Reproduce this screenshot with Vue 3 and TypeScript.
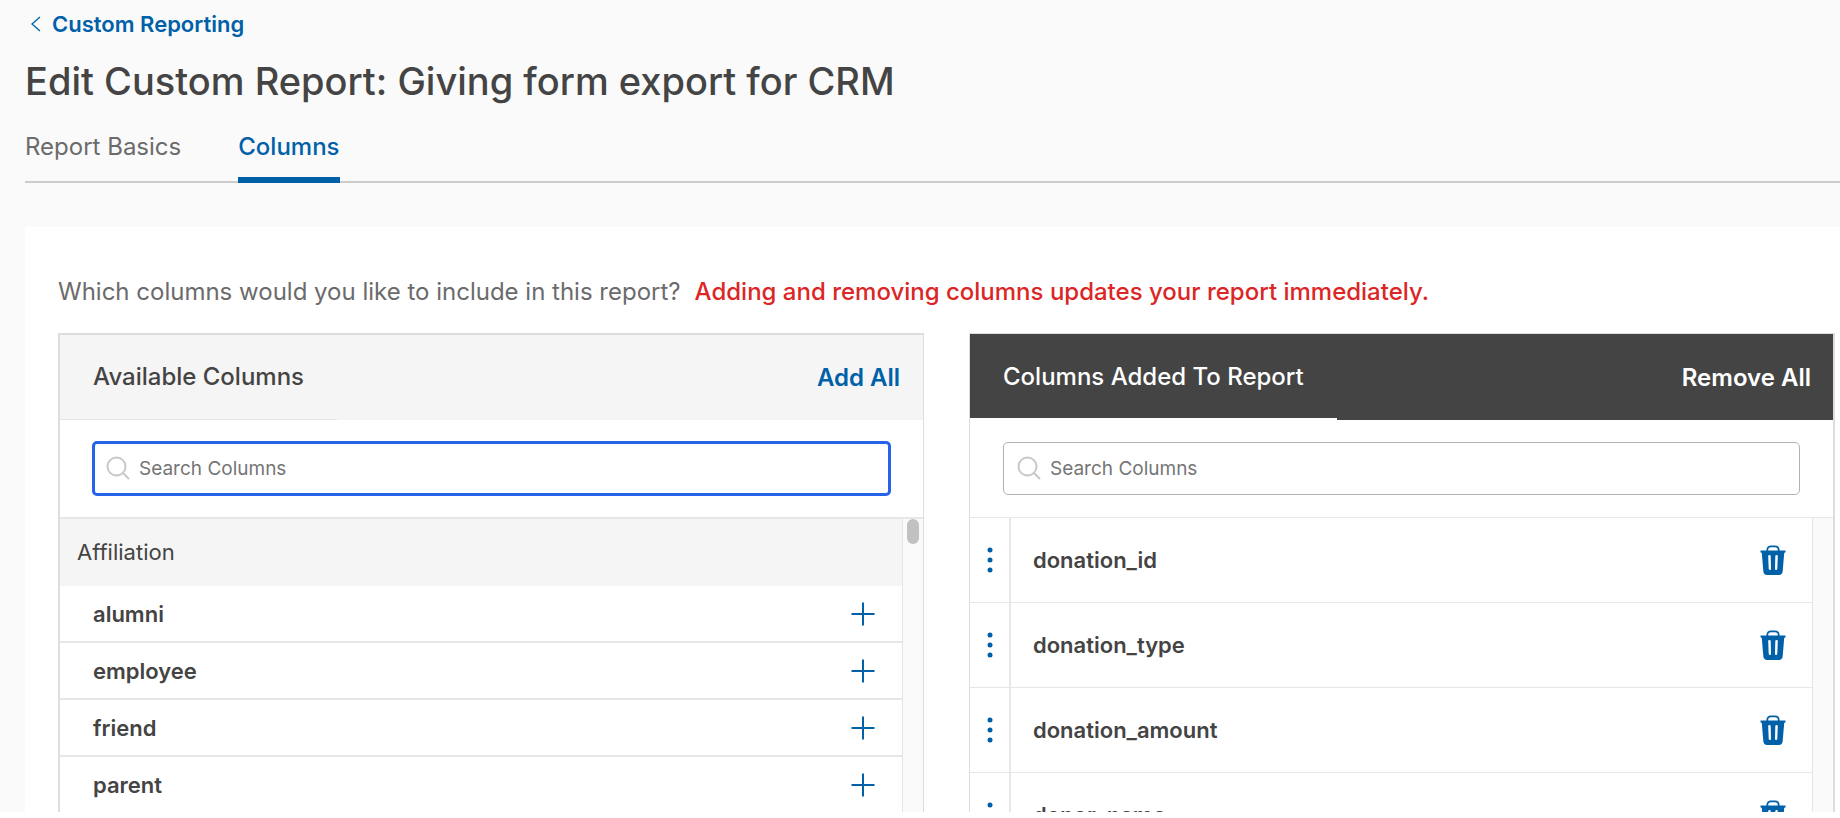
<script setup lang="ts">
import { ref } from 'vue'

const availableQuery = ref('')
const addedQuery = ref('')
const affiliations = ['alumni', 'employee', 'friend', 'parent']
const added = ['donation_id', 'donation_type', 'donation_amount', 'donor_name']
</script>

<template>
  <div class="page">
    <a class="back" href="#">
      <svg width="12" height="18" viewBox="0 0 12 18" aria-hidden="true">
        <path d="M10 2 2 9l8 7" fill="none" stroke="currentColor" stroke-width="1.3" />
      </svg>
      Custom Reporting
    </a>
    <h1>Edit Custom Report: Giving form export for CRM</h1>
    <nav class="tabs">
      <a href="#">Report Basics</a>
      <a href="#" class="active" aria-current="page">Columns</a>
    </nav>

    <main class="card">
      <p class="intro">
        <span>Which columns would you like to include in this report?</span>
        <strong>Adding and removing columns updates your report immediately.</strong>
      </p>
      <div class="panels">
        <section class="panel">
          <header>
            <h2>Available Columns</h2>
            <button type="button">Add All</button>
          </header>
          <label class="search focused">
            <svg width="24" height="26" viewBox="0 0 24 26" aria-hidden="true">
              <circle cx="10.500" cy="10.500" r="9" />
              <path d="m17 17 6 6" />
            </svg>
            <input v-model="availableQuery" type="text" placeholder="Search Columns" aria-label="Search available columns" />
          </label>
          <div class="body">
            <div class="list">
              <h3>Affiliation</h3>
              <ul class="available">
                <li v-for="name in affiliations" :key="name">
                  <span>{{ name }}</span>
                  <button type="button" :aria-label="`Add ${name}`">
                    <svg width="24" height="24" viewBox="0 0 24 24" aria-hidden="true">
                      <path d="M12 .5v23M.5 12h23" fill="none" stroke="currentColor" stroke-width="2" />
                    </svg>
                  </button>
                </li>
              </ul>
            </div>
            <div class="track"><div class="thumb"></div></div>
          </div>
        </section>

        <section class="panel dark">
          <header>
            <h2>Columns Added To Report</h2>
            <button type="button">Remove All</button>
          </header>
          <label class="search">
            <svg width="24" height="26" viewBox="0 0 24 26" aria-hidden="true">
              <circle cx="10.500" cy="10.500" r="9" />
              <path d="m17 17 6 6" />
            </svg>
            <input v-model="addedQuery" type="text" placeholder="Search Columns" aria-label="Search added columns" />
          </label>
          <div class="body">
            <ul class="list added">
              <li v-for="name in added" :key="name">
                <button type="button" class="handle" :aria-label="`Move ${name}`">
                  <svg width="6" height="26" viewBox="0 0 6 26" fill="currentColor" aria-hidden="true">
                    <circle cx="3" cy="3" r="2.500" />
                    <circle cx="3" cy="13" r="2.500" />
                    <circle cx="3" cy="23" r="2.500" />
                  </svg>
                </button>
                <span>{{ name }}</span>
                <button type="button" :aria-label="`Remove ${name}`">
                  <svg width="26" height="30" viewBox="0 0 26 30" aria-hidden="true">
                    <path d="M7.300 6V5Q7.300 1.400 11 1.400h4q3.700 0 3.700 3.600v1" fill="none" stroke="currentColor" stroke-width="1.800" />
                    <path fill="currentColor" fill-rule="evenodd" d="M.5 5.500h25v1.700l-1.300.8-1.500 18q-.3 4-4 4H7.300q-3.700 0-4-4L1.800 8 .5 7.200zM8.200 11q0-1 1.200-1t1.300 1l.3 13q0 1-1.100 1t-1.200-1zM15.300 11q.1-1 1.300-1t1.200 1l-.5 13q-.1 1-1.200 1T15 24z" />
                  </svg>
                </button>
              </li>
            </ul>
            <div class="track"></div>
          </div>
        </section>
      </div>
    </main>
  </div>
</template>

<style>
body {
  background: #fafafa;
}
</style>

<style scoped>
* {
  box-sizing: border-box;
}

.page {
  height: 100vh;
  overflow: hidden;
  display: flex;
  flex-direction: column;
  padding-left: 25px;
  border-bottom: 6px solid #fff;
  background: #fafafa;
  color: #444;
  font-family: Inter, "Open Sans", sans-serif;
}

h1,
h2,
h3,
p,
ul {
  margin: 0;
  padding: 0;
  font-weight: 500;
}

ul {
  list-style: none;
}

a {
  text-decoration: none;
}

button {
  padding: 0;
  border: 0;
  background: none;
  color: #0060a8;
  font: inherit;
  cursor: pointer;
}

svg {
  display: block;
}

.back {
  align-self: flex-start;
  display: flex;
  align-items: center;
  gap: 10px;
  height: 48px;
  padding-left: 5px;
  color: #0060a8;
  font-size: 22px;
  font-weight: 600;
}

h1 {
  height: 66px;
  font-size: 38px;
  line-height: 66px;
  white-space: nowrap;
}

.tabs {
  flex: none;
  display: flex;
  gap: 57px;
  height: 69px;
  border-bottom: 2px solid #ccc;
  font-size: 24px;
  line-height: 66px;
}

.tabs a {
  height: 69px;
  color: #6b6b6b;
}

.tabs .active {
  border-bottom: 6px solid #0060a8;
  color: #0060a8;
  font-weight: 500;
}

.card {
  flex: 1;
  min-height: 0;
  display: flex;
  flex-direction: column;
  margin-top: 44px;
  padding: 44px 5px 0 33px;
  background: #fff;
}

.intro {
  flex: none;
  display: flex;
  gap: 14px;
  height: 62px;
  color: #6b6b6b;
  font-size: 24px;
  font-weight: 400;
  line-height: 41px;
  white-space: nowrap;
}

.intro strong {
  color: #dc2626;
  font-weight: 500;
}

.panels {
  flex: 1;
  min-height: 0;
  display: grid;
  grid-template-columns: 1fr 1fr;
  grid-template-rows: minmax(0, 1fr);
  gap: 45px;
}

.panel {
  display: flex;
  flex-direction: column;
  border: 2px solid #ddd;
  border-right-width: 1px;
  border-bottom: 0;
}

.dark {
  border-width: 1px 2px 0 1px;
}

header {
  flex: none;
  display: flex;
  justify-content: space-between;
  height: 85px;
  padding-right: 23px;
  background: #f5f5f5;
  font-size: 24px;
  line-height: 84px;
}

.dark header {
  height: 86px;
  padding-right: 22px;
  background: #444;
  line-height: 85px;
}

h2 {
  padding: 0 33px;
  border-bottom: 1px solid #e5e5e5;
  font-size: 24px;
}

.dark h2 {
  height: 85px;
  border-bottom: 1px solid #fff;
  box-shadow: 0 1px #fff;
}

header button {
  font-weight: 600;
}

.dark h2,
.dark header button {
  color: #fff;
}

.search {
  flex: none;
  display: flex;
  align-items: center;
  gap: 9px;
  height: 53px;
  margin: 22px 33px;
  padding-left: 13px;
  border: 1px solid #b3b3b3;
  border-radius: 5px;
}

.focused {
  height: 55px;
  margin: 21px 32px;
  padding-left: 11px;
  border: 3px solid #2563eb;
}

.search svg {
  fill: none;
  stroke: #c8c8c8;
  stroke-width: 2;
}

.search input {
  flex: 1;
  min-width: 0;
  padding: 0;
  border: 0;
  outline: 0;
  background: transparent;
  color: #444;
  font: 400 19px Inter, "Open Sans", sans-serif;
}

.search input::placeholder {
  color: #757575;
  opacity: 1;
}

.body {
  flex: 1;
  min-height: 0;
  display: flex;
  overflow: hidden;
  border-top: 2px solid #e5e7eb;
}

.dark .body {
  border-top-width: 1px;
}

.list {
  flex: 1;
  font-size: 22px;
}

.track {
  flex: none;
  width: 21px;
  padding: 0 4px;
  border-left: 1px solid #e5e5e5;
  background: #fafafa;
}

.thumb {
  width: 12px;
  height: 25px;
  border-radius: 6px;
  background: #c1c1c1;
}

h3 {
  height: 67px;
  padding-left: 17px;
  background: #f5f5f5;
  font-size: 22px;
  font-weight: 400;
  line-height: 67px;
}

li {
  display: flex;
  align-items: center;
  font-weight: 600;
}

li span {
  flex: 1;
}

.available li {
  height: 57px;
  padding: 0 27px 0 33px;
  border-bottom: 2px solid #e5e7eb;
}

.added li {
  height: 85px;
  padding-right: 26px;
  border-bottom: 1px solid #e5e7eb;
}

.handle {
  align-self: stretch;
  display: flex;
  align-items: center;
  justify-content: center;
  width: 41px;
  margin-right: 22px;
  border-right: 2px solid #e5e7eb;
}
</style>
